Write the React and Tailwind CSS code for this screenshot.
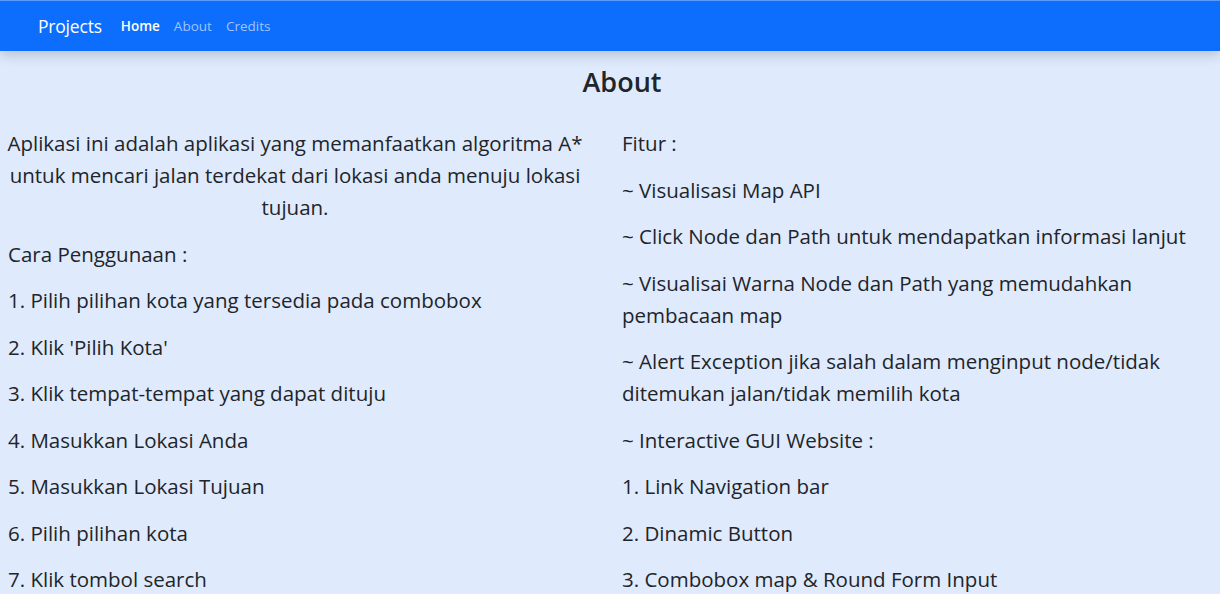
import React from 'react';

const left = [
  'Cara Penggunaan :',
  "1. Pilih pilihan kota yang tersedia pada combobox",
  "2. Klik 'Pilih Kota'",
  '3. Klik tempat-tempat yang dapat dituju',
  '4. Masukkan Lokasi Anda',
  '5. Masukkan Lokasi Tujuan',
  '6. Pilih pilihan kota',
  '7. Klik tombol search',
];

const right = [
  'Fitur :',
  '~ Visualisasi Map API',
  '~ Click Node dan Path untuk mendapatkan informasi lanjut',
  '~ Visualisai Warna Node dan Path yang memudahkan pembacaan map',
  '~ Alert Exception jika salah dalam menginput node/tidak ditemukan jalan/tidak memilih kota',
  '~ Interactive GUI Website :',
  '1. Link Navigation bar',
  '2. Dinamic Button',
  '3. Combobox map & Round Form Input',
];

export default function App() {
  return (
    <div
      className="min-h-[594px] bg-[#dfeafd] text-[#212529]"
      style={{ fontFamily: '"Open Sans", "Noto Sans", sans-serif' }}
    >
      <nav className="relative z-10 h-[51px] border-t border-[#5a9bfd] bg-[#0d6efd] shadow-[0_4px_12px_rgba(0,0,0,0.18)] flex items-center pl-[38px]">
        <span className="text-[17.5px] text-white mr-[19px] tracking-[-0.2px]">Projects</span>
        <div className="flex items-center gap-[14px] text-[13.5px]">
          <a className="text-white font-semibold">Home</a>
          <a className="text-[#9ec5fe]">About</a>
          <a className="text-[#9ec5fe]">Credits</a>
        </div>
      </nav>

      <h3 className="text-center text-[27px] font-semibold leading-[34px] mt-[14px] mb-[28px] pl-6">About</h3>

      <div className="grid grid-cols-[580px_574px] gap-x-[37px] pl-[5px] text-[20.5px] leading-[32px]">
        <div>
          <p className="text-center mb-[14.5px]">
            Aplikasi ini adalah aplikasi yang memanfaatkan algoritma A* untuk mencari jalan terdekat dari lokasi anda
            menuju lokasi tujuan.
          </p>
          {left.map((t) => (
            <p key={t} className="mb-[14.5px] pl-[3px]">{t}</p>
          ))}
        </div>
        <div>
          {right.map((t) => (
            <p key={t} className="mb-[14.5px]">{t}</p>
          ))}
        </div>
      </div>
    </div>
  );
}
